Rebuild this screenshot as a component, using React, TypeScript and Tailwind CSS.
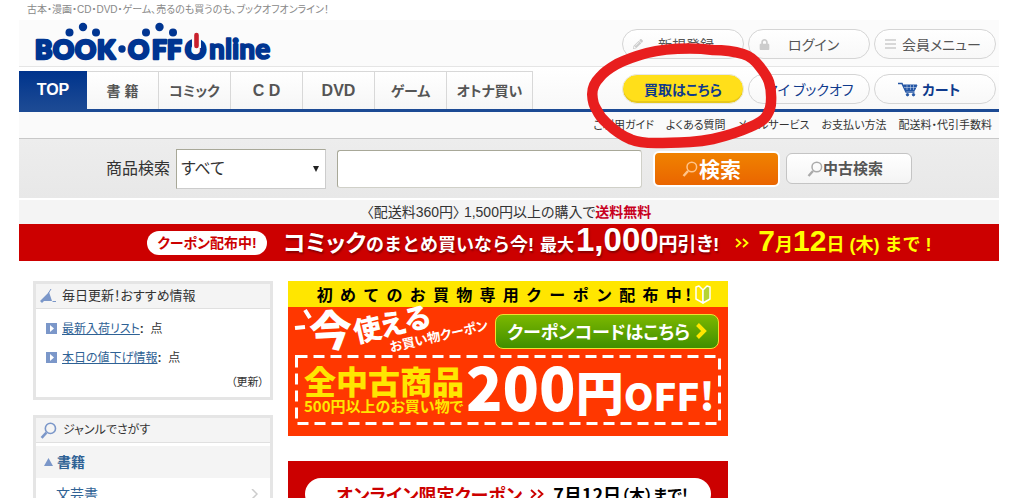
import type { ReactNode } from "react";
import { FaLock, FaPencilAlt } from "react-icons/fa";

interface NavItem {
  label: string;
  style: string;
}

const NAV_ITEMS: NavItem[] = [
  { label: "書 籍", style: "w-18 text-sm" },
  { label: "コミック", style: "w-18 text-sm" },
  { label: "C D", style: "w-18 text-base" },
  { label: "DVD", style: "w-18 text-base" },
  { label: "ゲーム", style: "w-18 text-sm" },
  { label: "オトナ買い", style: "w-[86px] text-sm" },
];

const HELP_LINKS = ["ご利用ガイド", "よくある質問", "メールサービス", "お支払い方法", "配送料・代引手数料"];

const PICKUPS = ["最新入荷リスト", "本日の値下げ情報"];

export default function App() {
  return (
    <div className="h-screen overflow-hidden bg-white pl-[19px] pr-7 font-['Liberation_Sans','Noto_Sans_CJK_JP',sans-serif] text-[#333] [font-feature-settings:'palt']">
      <p className="h-5 pl-2 text-[10px] leading-5 text-[#888]">
        古本・漫画・CD・DVD・ゲーム、売るのも買うのも、ブックオフオンライン！
      </p>
      <Header />
      <SearchBar />
      <p className="mt-0.5 bg-[#f4f4f4] text-center text-sm leading-6">
        〈配送料360円〉 1,500円以上の購入で<strong className="text-[#c8001e]">送料無料</strong>
      </p>
      <CampaignBar />
      <main className="flex gap-[15px] pl-3.5 pt-5">
        <aside className="flex w-60 shrink-0 flex-col gap-[15px]">
          <UpdatesBox />
          <GenreBox />
        </aside>
        <div className="flex w-[440px] shrink-0 flex-col gap-[25px]">
          <FirstCoupon />
          <OnlineCoupon />
        </div>
      </main>
    </div>
  );
}

function Header() {
  return (
    <header className="relative">
      <div className="flex h-[47px] border-b border-[#e5e5e5] bg-[#fbfbfb] pl-4">
        <Logo />
      </div>
      <nav className="flex h-[45px] items-end border-b-3 border-[#1c4a94] bg-linear-to-b from-white to-[#f8f8f8] font-['Liberation_Sans','Noto_Sans_CJK_JP',sans-serif]">
        <a href="#top" className="flex h-[38px] w-[68px] items-center justify-center bg-linear-to-b from-[#00338c] to-[#1c4a94] text-base font-bold text-white">
          TOP
        </a>
        {NAV_ITEMS.map((item) => (
          <a
            key={item.label}
            href="#category"
            className={`flex h-[38px] items-center justify-center border-r border-t border-[#d8d8d8] bg-linear-to-b from-white to-[#f6f6f6] font-bold text-[#555] ${item.style}`}
          >
            {item.label}
          </a>
        ))}
      </nav>
      <ul className="flex h-[27px] items-center justify-end gap-3 border-b border-[#c8c8c8] bg-[#fafafa] pr-[7px] text-[11px]">
        {HELP_LINKS.map((label) => (
          <li key={label}>
            <a href="#help">{label}</a>
          </li>
        ))}
      </ul>
      <div className="absolute right-[3px] top-[9px] grid grid-cols-3 gap-x-1 gap-y-[15px] font-['Noto_Sans_CJK_JP',sans-serif]">
        <PillLink className="pl-2.5 text-[#555]">
          <FaPencilAlt className="mr-[15px] text-[10px] text-[#ccc]" />
          新規登録
        </PillLink>
        <PillLink className="pl-2.5 text-[#555]">
          <FaLock className="mr-[18px] text-[11px] text-[#ccc]" />
          ログイン
        </PillLink>
        <PillLink className="pl-2.5 text-[#555]">
          <svg viewBox="0 0 11 10" className="mr-1.5 h-2.5 w-[11px]" stroke="#ccc" strokeWidth="1.4">
            <path d="M0 1h11M0 5h11M0 9h11" />
          </svg>
          会員メニュー
        </PillLink>
        <a href="#sell" className="flex h-[30px] w-[122px] items-center justify-center rounded-full border border-[#e8e8e8] bg-[#ffdf1a] text-sm font-bold text-[#0f3a8c] shadow-[inset_0_-2px_0_#e8c81a]">
          買取はこちら
        </a>
        <PillLink className="pl-4 text-[#0f3a8c]">マイ ブックオフ</PillLink>
        <PillLink className="pl-[23px] font-bold text-[#0f3a8c]">
          <CartIcon />
          カート
        </PillLink>
        <HandCircle />
      </div>
    </header>
  );
}

function PillLink({ className, children }: { className: string; children: ReactNode }) {
  return (
    <a
      href="#account"
      className={`flex h-[30px] w-[122px] items-center rounded-full border border-[#d5d5d5] bg-linear-to-b from-white to-[#f8f8f8] text-sm ${className}`}
    >
      {children}
    </a>
  );
}

function Logo() {
  return (
    <svg viewBox="0 0 240 42" className="h-[42px] w-60 overflow-visible" role="img" aria-label="BOOK・OFF Online">
      <g fill="#003591" stroke="#003591" strokeWidth="2.600" strokeLinejoin="round" fontFamily="Lato, sans-serif" fontWeight="900" fontSize="26">
        <text x="0" y="39">B</text>
        <text x="18" y="39">O</text>
        <text x="40" y="39">O</text>
        <text x="62" y="39">K</text>
        <text x="93" y="39">O</text>
        <text x="117" y="39">F</text>
        <text x="132" y="39">F</text>
        <text x="150" y="39">O</text>
        <text x="174" y="39" strokeWidth="1.600" fontSize="28">nline</text>
      </g>
      <g fill="#003591">
        <circle cx="87" cy="29" r="3.700" />
        <circle cx="34.500" cy="12.500" r="4" />
        <circle cx="48" cy="7" r="4.200" />
        <circle cx="61" cy="12.500" r="4" />
        <circle cx="111" cy="12.500" r="4" />
        <circle cx="124.500" cy="7" r="4.200" />
        <circle cx="138" cy="12.500" r="4" />
      </g>
      <path d="M161.500 15v13" stroke="#fbfbfb" strokeWidth="9" />
      <path d="M161.500 15v11" stroke="#c9202c" strokeWidth="4.600" strokeLinecap="round" />
    </svg>
  );
}

function CartIcon() {
  return (
    <svg viewBox="0 0 20 15" className="mr-1 h-[15px] w-5" fill="none" stroke="#2456a5">
      <path d="M0 1.500h4l4 8.500h8.500" strokeWidth="1.500" />
      <path d="M5.500 3h13.500l-2.500 5.500h-8.500z" fill="#2456a5" />
      <path d="M9 3v5M12.500 3v5M15.500 3v5M6 5.500h12" stroke="#dbe4f2" strokeWidth=".5" />
      <circle cx="9.500" cy="12.700" r="1.200" fill="#2456a5" />
      <circle cx="15.500" cy="12.700" r="1.200" fill="#2456a5" />
    </svg>
  );
}

// red marker ring drawn around the sell button
function HandCircle() {
  return (
    <svg viewBox="0 0 192 108" className="pointer-events-none absolute -left-9 top-3 h-[108px] w-48" fill="none" stroke="#e81e1e" strokeLinejoin="round">
      <path
        d="M104 7.500C88 7.500 74 8.500 61 12C50 15 40 18.500 31 23C24 27 18 31 14 36C8 42 6 48 6.300 54C6.500 60 8 65 10.700 69C13 74 16 78 20.700 82C28 89 36 95 45 98.500C52 101.500 60 102 70 102C82 102 93 101.500 104 101C113 100.500 120 99.500 127 98C140 95 153 91 164 86C171 83 178 80 181 74C184 69 185 65 185 61C185.500 53 185 47 183 41C181 35 178 31 174 26C169 19 164 15 157 13C147 10 137 9 127 9C119 8 112 7.500 104 7.500z"
        strokeWidth="10.500"
      />
    </svg>
  );
}

function Magnifier({ className }: { className: string }) {
  return (
    <svg viewBox="0 0 16 16" className={className} fill="none" stroke="currentColor">
      <circle cx="9.800" cy="6" r="4.800" strokeWidth="1.500" />
      <path d="M6 10l-4.500 5" strokeWidth="2.400" />
    </svg>
  );
}

function SearchBar() {
  return (
    <form className="flex h-[59px] items-center bg-linear-to-b from-[#ededed] to-[#e8e8e8] pl-[87px]">
      <label htmlFor="category" className="mr-1.5 shrink-0 text-base">
        商品検索
      </label>
      <div className="relative mr-[11px]">
        <select id="category" className="h-10 w-[150px] appearance-none border border-[#ccc] border-l-[#a8a898] border-t-[#a8a898] bg-white pl-1 text-base">
          <option>すべて</option>
        </select>
        <svg viewBox="0 0 6 6" className="pointer-events-none absolute right-[7px] top-[17px] size-1.5" fill="#222">
          <path d="M0 0h6L3 6z" />
        </svg>
      </div>
      <input type="text" aria-label="キーワード" className="mr-[11px] h-[38px] w-[305px] rounded-[3px] border border-[#d0d0c8] border-l-[#a8a898] border-t-[#a8a898] bg-white px-2" />
      <button type="submit" className="mr-1.5 flex h-9 w-[127px] items-center justify-center gap-px rounded-md border-2 border-white bg-linear-to-b from-[#f08200] to-[#ea6500] pr-2.5 font-['Noto_Sans_CJK_JP',sans-serif] text-[21px] font-bold text-white">
        <Magnifier className="size-4 text-[#ffc48a]" />
        検索
      </button>
      <button type="button" className="flex h-[31px] w-[126px] items-center justify-center rounded-md border border-[#c4c4c4] bg-linear-to-b from-white to-[#f4f4f4] pr-2 font-['Noto_Sans_CJK_JP',sans-serif] text-[15px] font-bold text-[#555]">
        <Magnifier className="size-4 text-[#aaa]" />
        中古検索
      </button>
    </form>
  );
}

function CampaignBar() {
  return (
    <a href="#campaign" className="flex h-[37px] items-center whitespace-nowrap bg-[#c00] pl-32 font-['Liberation_Sans','Noto_Sans_CJK_JP',sans-serif] font-bold text-white">
      <span className="mr-4 flex h-6 w-30 items-center justify-center rounded-full bg-white text-sm text-[#c00]">クーポン配布中!</span>
      <span className="flex items-baseline leading-9 text-shadow-[1px_2px_2px_#800]">
        <span className="text-[23px]">コミック</span>
        <span className="mr-1.5 text-[18px] [font-feature-settings:normal]">のまとめ買いなら今!</span>
        <span className="mr-0.5 text-[17px]">最大</span>
        <span className="text-[33px]">1,000</span>
        <span className="text-[19px]">円引き!</span>
      </span>
      <svg viewBox="0 0 15 10" className="ml-4 mr-2 h-2.5 w-[15px]" fill="none" stroke="#ff0" strokeWidth="1.800">
        <path d="M1 1l4.500 4L1 9M8 1l4.500 4L8 9" />
      </svg>
      <span className="flex items-baseline leading-9 text-[#ff0]">
        <span className="text-[30px]">7</span>
        <span className="text-[18px]">月</span>
        <span className="text-[30px]">12</span>
        <span className="text-[18px] [font-feature-settings:normal]">日 (木) まで !</span>
      </span>
    </a>
  );
}

function UpdatesBox() {
  return (
    <section className="h-[119px] border-3 border-[#e5e5e5]">
      <h2 className="flex h-[25px] items-center gap-1.5 border-b border-[#e0e0e0] bg-[#f4f4f4] pl-1 text-[13px]">
        <svg viewBox="0 0 16 14" className="h-3.5 w-4" fill="#7b97c9">
          <path d="M0 12L9 3l3 9H4l-2 2zM12.500 12h3.500v1h-3.500z" />
          <path d="M8.500 4L11 0" stroke="#7b97c9" />
        </svg>
        毎日更新！おすすめ情報
      </h2>
      <ul className="pt-[5px] text-xs">
        {PICKUPS.map((label) => (
          <li key={label} className="flex h-[29px] items-center pl-2.5">
            <svg viewBox="0 0 11 11" className="mr-[5px] size-[11px]">
              <path d="M0 0h11v11H0z" fill="#7b97c9" />
              <path d="M4 2l4 3.500L4 9z" fill="#fff" />
            </svg>
            <a href="#pickup" className="text-[#2f6295] underline">
              {label}
            </a>
            <span className="whitespace-pre"><b>:</b>  点</span>
          </li>
        ))}
      </ul>
      <p className="pr-1.5 pt-0.5 text-right text-[11px] leading-4">（更新）</p>
    </section>
  );
}

function GenreBox() {
  return (
    <section className="border-3 border-[#e5e5e5]">
      <h2 className="flex h-[25px] items-center gap-1.5 border-b border-[#e0e0e0] bg-[#f4f4f4] pl-1 text-xs">
        <Magnifier className="size-[17px] text-[#7b97c9]" />
        ジャンルでさがす
      </h2>
      <h3 className="mt-[3px] flex h-8 items-center gap-1 bg-[#f4f4f4] pl-2 text-sm font-bold text-[#2f6295]">
        <svg viewBox="0 0 9 8" className="h-2 w-[9px]" fill="#7b97c9">
          <path d="M4.500 0L9 8H0z" />
        </svg>
        書籍
      </h3>
      <a href="#literature" className="flex h-8 items-center justify-between pl-5 pr-3 text-sm text-[#2f6295]">
        文芸書
        <svg viewBox="0 0 7 10" className="h-2.5 w-[7px]" fill="none" stroke="#ccc" strokeWidth="1.500">
          <path d="M1 0l5 5-5 5" />
        </svg>
      </a>
    </section>
  );
}

function FirstCoupon() {
  return (
    <a href="#coupon" className="block h-[155px] bg-[#ff3700] font-['Noto_Sans_CJK_JP',sans-serif] font-bold text-white">
      <div className="flex h-[26px] items-center justify-center gap-1 bg-[#ffe600] pl-3 text-black [font-feature-settings:normal]">
        <span className="whitespace-pre text-base">初  め  て  の  お  買  物  専  用  ク  ー  ポ  ン  配  布  中 !</span>
        <BeginnerMark />
      </div>
      <div className="flex h-12 items-center justify-between pr-[9px]">
        <SlantedCopy />
        <span className="flex h-[35px] w-56 items-center justify-center gap-1.5 rounded-lg border border-[#f0e030] bg-linear-to-b from-[#7cb800] to-[#3f8f00] text-lg">
          クーポンコードはこちら
          <svg viewBox="0 0 11 16" className="h-4 w-[11px]" fill="none" stroke="#ffe600" strokeWidth="4">
            <path d="M1.500 1.500L8 8l-6.500 6.500" />
          </svg>
        </span>
      </div>
      <div className="relative mx-[7px] flex h-[70px] items-center pl-[9px]">
        <svg className="absolute inset-0 size-full" fill="none" stroke="#fff" strokeWidth="3">
          <rect x="1.500" y="1.500" width="423" height="67" strokeDasharray="11 6" />
        </svg>
        <div className="w-[162px] shrink-0 whitespace-nowrap text-[#ffe600]">
          <p className="text-[32px] leading-8 font-black [font-feature-settings:normal]">全中古商品</p>
          <p className="text-[15px] leading-5">500円以上のお買い物で</p>
        </div>
        <p className="flex items-baseline whitespace-nowrap leading-[60px] font-black">
          <span className="text-[60px]">200</span>
          <span className="text-[48px]">円</span>
          <span className="text-[38px]">OFF!</span>
        </p>
      </div>
    </a>
  );
}

function BeginnerMark() {
  return (
    <svg viewBox="0 0 16 19" className="h-[19px] w-4" stroke="#fff" strokeWidth="1.500" strokeLinejoin="round">
      <path d="M1 2l3-1 4 4v13l-7-4z" fill="#ffe600" />
      <path d="M15 2l-3-1-4 4v13l7-4z" fill="#b5d433" />
    </svg>
  );
}

function SlantedCopy() {
  return (
    <svg viewBox="0 0 200 48" className="h-12 w-[200px] overflow-visible" fill="#fff" fontWeight="900">
      <path d="M17 3l5 8M7 21l10-1" stroke="#fff" strokeWidth="4" />
      <text x="22" y="41" fontSize="43" transform="rotate(-3 22 41)">今</text>
      <text x="68" y="36" fontSize="28" transform="rotate(-13 68 36)">使える</text>
      <text x="103" y="45" fontSize="13" fontWeight="700" transform="rotate(-13 103 45)">お買い物クーポン</text>
    </svg>
  );
}

function OnlineCoupon() {
  return (
    <a href="#online" className="block h-20 bg-[#c00] px-[17px] pt-[17px] font-['Noto_Sans_CJK_JP',sans-serif] font-bold">
      <span className="flex h-8 items-center justify-center whitespace-nowrap rounded-full bg-white pl-2 text-[#c00]">
        <span className="text-lg">オンライン限定クーポン</span>
        <svg viewBox="0 0 15 10" className="ml-2 mr-2 h-2.5 w-[15px]" fill="none" stroke="#c00" strokeWidth="1.800">
          <path d="M1 1l4.500 4L1 9M8 1l4.500 4L8 9" />
        </svg>
        <span className="text-lg text-black">7月12日</span>
        <span className="text-base text-black"> （木）まで!</span>
      </span>
    </a>
  );
}
